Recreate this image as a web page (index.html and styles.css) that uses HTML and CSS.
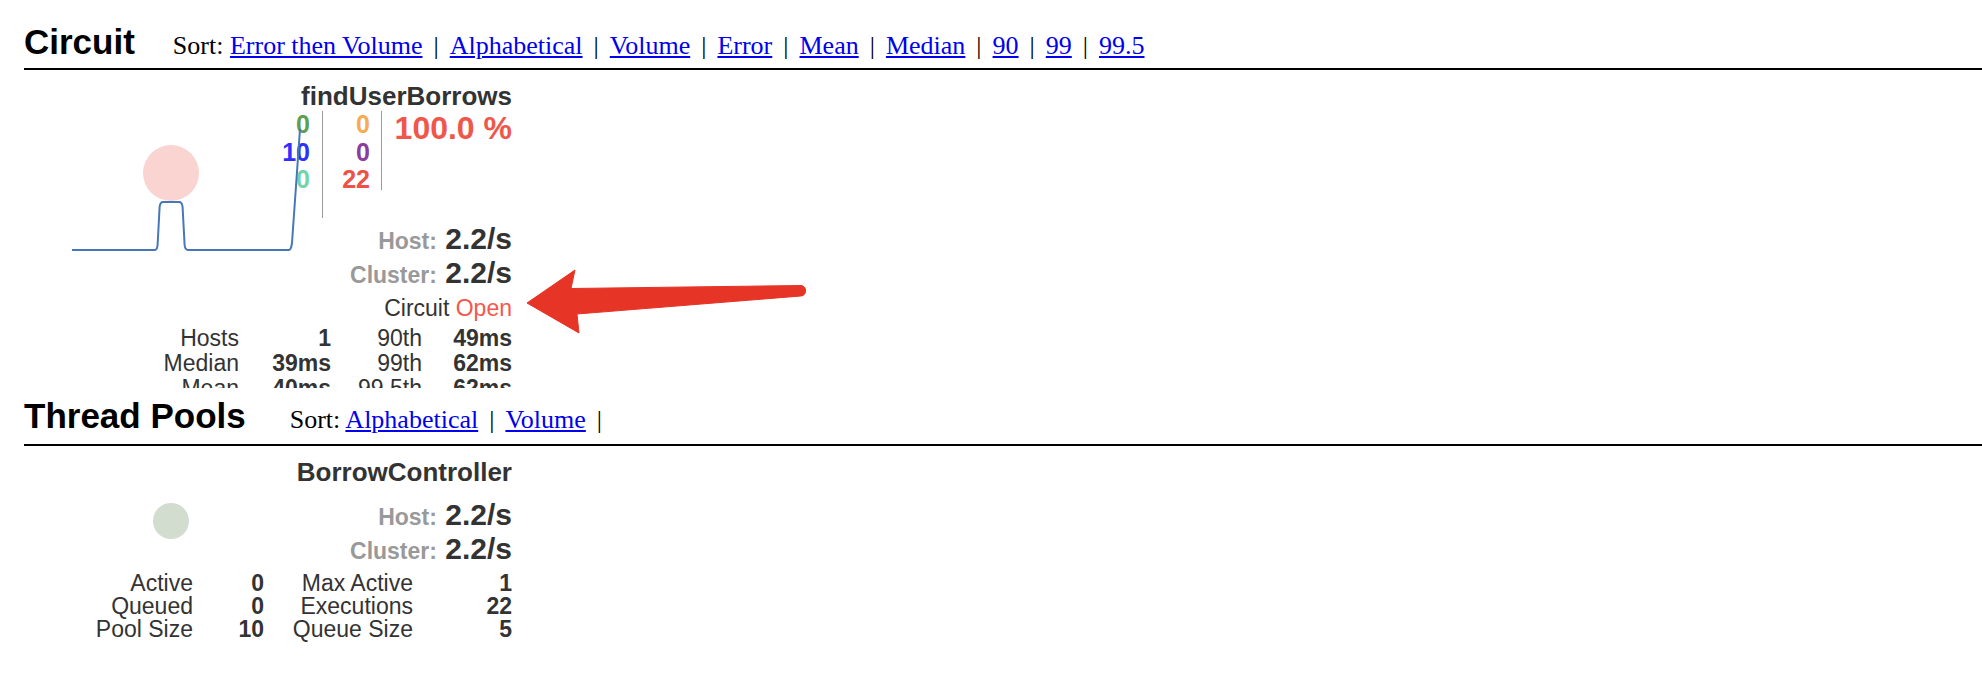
FILE: index.html
```html
<!DOCTYPE html>
<html>
<head>
<meta charset="utf-8">
<title>Hystrix Dashboard</title>
<link rel="stylesheet" href="styles.css">
</head>
<body>
<div class="page">
  <section class="section">
    <div class="menubar menubar-first">
      <h2 class="title">Circuit</h2>
      <div class="sort">Sort: <a href="#">Error then Volume</a><span class="sep">|</span><a href="#">Alphabetical</a><span class="sep">|</span><a href="#">Volume</a><span class="sep">|</span><a href="#">Error</a><span class="sep">|</span><a href="#">Mean</a><span class="sep">|</span><a href="#">Median</a><span class="sep">|</span><a href="#">90</a><span class="sep">|</span><a href="#">99</a><span class="sep">|</span><a href="#">99.5</a></div>
    </div>
    <div class="monitor monitor-circuit">
      <div class="name">findUserBorrows</div>
      <div class="counters">
        <div class="ccol c1">
          <span class="green">0</span>
          <span class="blue">10</span>
          <span class="teal">0</span>
        </div>
        <div class="ccol c2">
          <span class="orange">0</span>
          <span class="purple">0</span>
          <span class="red">22</span>
        </div>
        <div class="errpct">100.0 %</div>
      </div>
      <div class="rate rate-first"><span class="rlabel">Host:</span> <span class="rvalue">2.2/s</span></div>
      <div class="rate"><span class="rlabel">Cluster:</span> <span class="rvalue">2.2/s</span></div>
      <div class="status">Circuit <span class="open">Open</span></div>
      <div class="stats stats-circuit">
        <span>Hosts</span><span class="v">1</span><span>90th</span><span class="v">49ms</span>
        <span>Median</span><span class="v">39ms</span><span>99th</span><span class="v">62ms</span>
        <span>Mean</span><span class="v">40ms</span><span>99.5th</span><span class="v">62ms</span>
      </div>
      <svg class="chart" width="488" height="318" viewBox="0 0 488 318">
        <circle cx="147" cy="103" r="28" fill="#fad4d0"/>
        <path d="M48 180 L131 180 Q133 180 133.6 175 L135.6 137 Q136.2 132 139 132 L155 132 Q158 132 158.6 137 L160.6 175 Q161.2 180 164 180 L265 180 Q267 180 268 173 L276 59" fill="none" stroke="#4677b8" stroke-width="2"/>
      </svg>
    </div>
  </section>
  <section class="section">
    <div class="menubar menubar-second">
      <h2 class="title">Thread Pools</h2>
      <div class="sort">Sort: <a href="#">Alphabetical</a><span class="sep">|</span><a href="#">Volume</a><span class="sep">|</span></div>
    </div>
    <div class="monitor monitor-pool">
      <div class="name">BorrowController</div>
      <div class="rate rate-pool"><span class="rlabel">Host:</span> <span class="rvalue">2.2/s</span></div>
      <div class="rate"><span class="rlabel">Cluster:</span> <span class="rvalue">2.2/s</span></div>
      <div class="stats stats-pool">
        <span>Active</span><span class="v">0</span><span>Max Active</span><span class="v">1</span>
        <span>Queued</span><span class="v">0</span><span>Executions</span><span class="v">22</span>
        <span>Pool Size</span><span class="v">10</span><span>Queue Size</span><span class="v">5</span>
      </div>
      <svg class="chart" width="488" height="120" viewBox="0 0 488 120">
        <circle cx="147" cy="75" r="18" fill="#d2ddd0"/>
      </svg>
    </div>
  </section>
  <svg class="annotation" width="1982" height="682" viewBox="0 0 1982 682">
    <path d="M527 303 L575 270 L571 288.5 L801 285.5 A5.3 5.3 0 0 1 801 296 L577 314 L579 333 Z" fill="#e63427" stroke="#e63427" stroke-width="1" stroke-linejoin="round"/>
  </svg>
</div>
</body>
</html>
```

FILE: styles.css
```css
html, body {
  margin: 0;
  padding: 0;
  background: #fff;
}

body {
  font-family: "Liberation Sans", Arial, Helvetica, sans-serif;
  color: #333;
}

.page {
  position: relative;
  width: 1982px;
  height: 682px;
  overflow: hidden;
}

.menubar {
  margin-left: 24px;
  display: flex;
  align-items: baseline;
  border-bottom: 2px solid #000;
}

.menubar-first {
  padding-top: 22px;
  padding-bottom: 6px;
}

.menubar-second {
  padding-top: 8px;
  padding-bottom: 8px;
}

.title {
  margin: 0 38px 0 0;
  font-size: 35px;
  line-height: 40px;
  font-weight: bold;
  color: #000;
}

.menubar-second .title {
  margin-right: 44px;
}

.sort {
  font-family: "Liberation Serif", "Times New Roman", serif;
  font-size: 26px;
  color: #000;
}

.sort a {
  color: #0000ee;
  text-decoration: underline;
}

.sep {
  padding: 0 11px;
}

.monitor {
  position: relative;
  margin-left: 24px;
  width: 488px;
  text-align: right;
  overflow: hidden;
  box-sizing: border-box;
  padding-top: 11px;
}

.monitor-circuit {
  height: 318px;
}

.monitor-pool {
  height: 236px;
}

.name {
  font-size: 26px;
  line-height: 30px;
  font-weight: bold;
  color: #333;
}

.counters {
  display: flex;
  justify-content: flex-end;
  align-items: flex-start;
}

.ccol {
  display: flex;
  flex-direction: column;
  align-items: flex-end;
  font-size: 25px;
  line-height: 27.5px;
  font-weight: bold;
  border-right: 1.5px solid #9a9a9a;
}

.c1 {
  height: 107px;
  padding-right: 12px;
}

.c2 {
  width: 47px;
  height: 79px;
  padding-right: 11px;
}

.errpct {
  width: 130px;
  font-size: 32px;
  line-height: 35px;
  font-weight: bold;
  color: #ef574b;
}

.green { color: #5e9f50; }
.blue { color: #2f2fff; }
.teal { color: #74d4a8; }
.orange { color: #f6ab55; }
.purple { color: #8b3c9e; }
.red { color: #ee5147; }

.rate {
  font-size: 30px;
  line-height: 34px;
  font-weight: bold;
}

.rate-first {
  margin-top: 4px;
}

.rate-pool {
  margin-top: 11px;
}

.rlabel {
  font-size: 23px;
  line-height: 1;
  color: #999;
}

.rvalue {
  color: #333;
}

.status {
  font-size: 23px;
  line-height: 36px;
  color: #333;
}

.open {
  color: #f5574b;
}

.stats {
  display: grid;
  justify-content: end;
  font-size: 23px;
  color: #333;
}

.stats .v {
  font-weight: bold;
}

.stats-circuit {
  grid-template-columns: 91px 92px 91px 90px;
  line-height: 25px;
}

.stats-pool {
  grid-template-columns: 133px 71px 149px 99px;
  line-height: 23px;
  margin-top: 6px;
}

.chart {
  position: absolute;
  left: 0;
  top: 0;
  pointer-events: none;
}

.annotation {
  position: absolute;
  left: 0;
  top: 0;
  pointer-events: none;
}
```
